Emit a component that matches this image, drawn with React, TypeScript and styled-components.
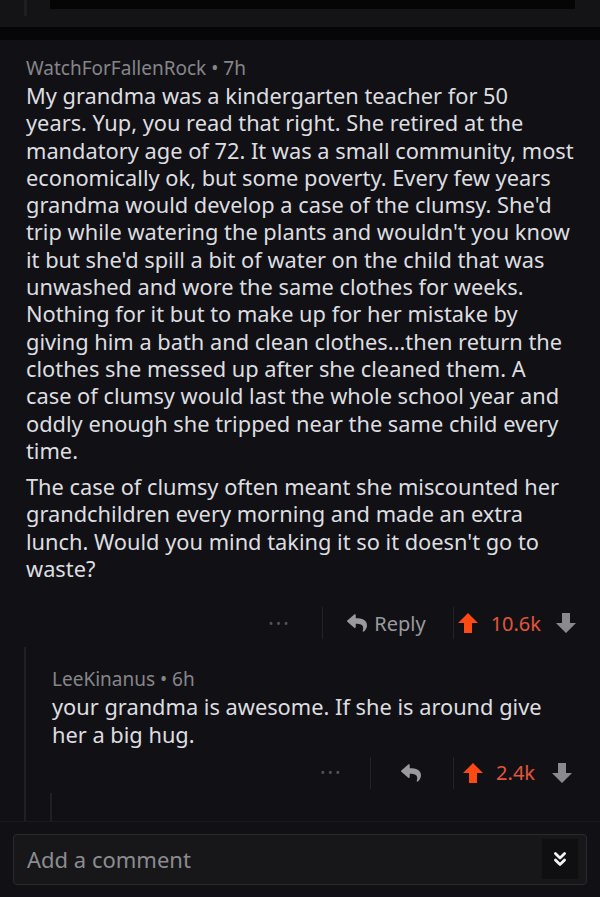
import styled, { createGlobalStyle } from "styled-components";
import { FaReply } from "react-icons/fa";
import { FiChevronsDown } from "react-icons/fi";

const GlobalStyle = createGlobalStyle`
    body {
        margin: 0;
        background: #111115;
        font-family: "Noto Sans", "Open Sans", sans-serif;
        color: #dcdcde;
    }
`;

const Page = styled.div`
    width: 600px;
    height: 897px;
    overflow: hidden;
    background: #111115;
`;

const ParentStub = styled.div`
    height: 27px;
    background: #141417;
    display: flex;
    padding-left: 24px;
`;

const StubThread = styled.div`
    width: 3px;
    height: 16px;
    background: #1e1e23;
`;

const StubMedia = styled.div`
    margin-left: 23px;
    width: 525px;
    height: 9px;
    background: #050505;
`;

const Divider = styled.div`
    height: 13px;
    background: #060607;
`;

const Comment = styled.div`
    padding: ${p => p.$top}px ${p => p.$right}px 0 26px;
`;

const Meta = styled.div`
    font-size: 19px;
    line-height: 22px;
    color: #86868a;
`;

const Body = styled.div`
    margin-top: 3px;
    font-size: 21.8px;
    line-height: 27.3px;
    color: #dedee0;
`;

const Para = styled.p`
    margin: 0 0 9px;
`;

const Line = styled.span`
    display: block;
    white-space: nowrap;
`;

const Actions = styled.div`
    display: flex;
    justify-content: flex-end;
    align-items: center;
    height: 32px;
    margin-top: ${p => p.$top}px;
    color: #8a8a8e;
    font-size: 20px;
`;

const Dots = styled.span`
    font-size: 12px;
    letter-spacing: 3px;
    color: #55555a;
    margin-right: ${p => p.$gap}px;
`;

const Sep = styled.div`
    width: 1px;
    height: 32px;
    background: #242428;
    margin-right: ${p => p.$gap}px;
`;

const ReplyBtn = styled.span`
    display: flex;
    align-items: center;
    gap: 7px;
    color: #9a9a9e;
    margin-right: ${p => p.$gap}px;
`;

const Score = styled.span`
    color: #e2553c;
    margin: 0 ${p => p.$gap}px 0 12px;
`;

const Thread = styled.div`
    margin: 8px 0 0 24px;
    border-left: 2px solid #1f1f24;
`;

const Tail = styled.div`
    height: 32px;
    display: flex;
    padding-left: 24px;
`;

const TailLine = styled.div`
    width: 2px;
    background: #1f1f24;
    margin-top: ${p => p.$top}px;
    margin-right: 24px;
`;

const Footer = styled.div`
    border-top: 1px solid #1a1a1e;
    padding: 12px 13px 0 13px;
`;

const Composer = styled.div`
    height: 49px;
    border: 1px solid #2a2a2e;
    border-radius: 4px;
    background: #17171a;
    display: flex;
    align-items: center;
    justify-content: space-between;
    padding-left: 13px;
    color: #8c8c90;
    font-size: 22px;
`;

const Expand = styled.div`
    width: 36px;
    height: 40px;
    margin-right: 8px;
    background: #0f0f12;
    display: flex;
    align-items: center;
    justify-content: center;
    color: #f2f2f2;
`;

function Vote({ down }: { down?: boolean }) {
    return (
        <svg width="22" height="22" viewBox="0 0 22 22" style={{ transform: down ? "rotate(180deg)" : undefined }}>
            <path d="M11 1 L21 11 H15 V21 H7 V11 H1 Z" fill={down ? "#8a8a8e" : "#ff4a14"} />
        </svg>
    );
}

const p1 = [
    "My grandma was a kindergarten teacher for 50",
    "years. Yup, you read that right. She retired at the",
    "mandatory age of 72. It was a small community, most",
    "economically ok, but some poverty. Every few years",
    "grandma would develop a case of the clumsy. She'd",
    "trip while watering the plants and wouldn't you know",
    "it but she'd spill a bit of water on the child that was",
    "unwashed and wore the same clothes for weeks.",
    "Nothing for it but to make up for her mistake by",
    "giving him a bath and clean clothes...then return the",
    "clothes she messed up after she cleaned them. A",
    "case of clumsy would last the whole school year and",
    "oddly enough she tripped near the same child every",
    "time.",
];

const p2 = [
    "The case of clumsy often meant she miscounted her",
    "grandchildren every morning and made an extra",
    "lunch. Would you mind taking it so it doesn't go to",
    "waste?",
];

function App() {
    return (
        <Page>
            <GlobalStyle />
            <ParentStub>
                <StubThread />
                <StubMedia />
            </ParentStub>
            <Divider />

            <Comment $top={17} $right={23}>
                <Meta>WatchForFallenRock • 7h</Meta>
                <Body>
                    <Para>{p1.map(l => <Line key={l}>{l}</Line>)}</Para>
                    <Para>{p2.map(l => <Line key={l}>{l}</Line>)}</Para>
                </Body>
                <Actions $top={25}>
                    <Dots $gap={31}>•••</Dots>
                    <Sep $gap={24} />
                    <ReplyBtn $gap={27}><FaReply size={20} />Reply</ReplyBtn>
                    <Sep $gap={3} />
                    <Vote />
                    <Score $gap={14}>10.6k</Score>
                    <Vote down />
                </Actions>
            </Comment>

            <Thread>
                <Comment $top={21} $right={27}>
                    <Meta>LeeKinanus • 6h</Meta>
                    <Body>
                        <Line>your grandma is awesome. If she is around give</Line>
                        <Line>her a big hug.</Line>
                    </Body>
                    <Actions $top={9}>
                        <Dots $gap={27}>•••</Dots>
                        <Sep $gap={30} />
                        <ReplyBtn $gap={32}><FaReply size={20} /></ReplyBtn>
                        <Sep $gap={8} />
                        <Vote />
                        <Score $gap={16}>2.4k</Score>
                        <Vote down />
                    </Actions>
                </Comment>
            </Thread>
            <Tail>
                <TailLine $top={0} />
                <TailLine $top={4} />
            </Tail>

            <Footer>
                <Composer>
                    Add a comment
                    <Expand><FiChevronsDown size={22} strokeWidth={3} /></Expand>
                </Composer>
            </Footer>
        </Page>
    );
}

export default App;
